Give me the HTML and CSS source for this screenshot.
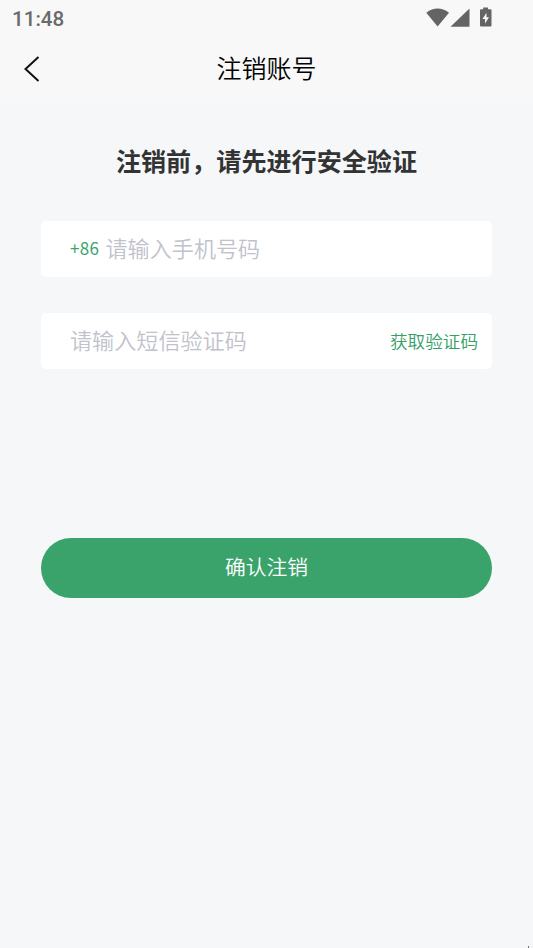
FILE: index.html
```html
<!DOCTYPE html>
<html lang="zh-CN">
<head>
<meta charset="utf-8">
<title>注销账号</title>
<link rel="stylesheet" href="styles.css">
</head>
<body>
<div class="status">
  <span class="time">11:48</span>
  <svg class="indicators" width="68" height="22" viewBox="0 0 68 22" fill="#646464">
    <path d="M0.300 5.700Q11.500-2.700 23 5.700L11.600 19.500Z"/>
    <path d="M43.500 1.500V19.800H24.500Z"/>
    <path fill-rule="evenodd" d="M57.200 0.500H62V2.300H64.500Q65.500 2.300 65.500 3.300V18.500Q65.500 19.500 64.500 19.500H55Q54 19.500 54 18.500V3.300Q54 2.300 55 2.300H57.200ZM60.500 5.800L56.500 12H59V16.500L63 10.300H60.500Z"/>
  </svg>
</div>
<header class="nav">
  <svg class="back" width="18" height="28" viewBox="0 0 18 28" fill="none" stroke="#111" stroke-width="2"><path d="M15.500 2L2.500 14L15.500 26"/></svg>
  <h1>注销账号</h1>
</header>
<main>
  <h2>注销前，请先进行安全验证</h2>
  <div class="field phone"><span class="code">+86</span><span class="hint">请输入手机号码</span></div>
  <div class="field sms"><span class="hint">请输入短信验证码</span><span class="send">获取验证码</span></div>
  <button class="confirm">确认注销</button>
</main>
<i class="corner"></i>
</body>
</html>
```

FILE: styles.css
```css
* { box-sizing: border-box; }
body { position: relative; margin: 0; height: 948px; overflow: hidden; background: #f5f7f9; font-family: "Noto Sans CJK SC", sans-serif; }
.status { height: 37px; padding: 7px 39px 0 12px; background: #f8f8f8; display: flex; justify-content: space-between; }
.time { font: 500 20.6px/24px Roboto, sans-serif; color: #6a6a6a; }
.nav { height: 66px; padding: 0 23px; background: #f8f8f8; display: grid; grid-template-columns: 18px 1fr 18px; }
.back { margin-top: 18px; }
h1 { margin: 12px 0 0; font-size: 25px; line-height: 36px; font-weight: 350; text-align: center; color: #000; }
main { padding: 39px 41px 0; }
h2 { margin: 0 0 41.500px; font-size: 25.1px; line-height: 37px; font-weight: 700; text-align: center; color: #333; white-space: nowrap; }
.field { height: 56.500px; margin-bottom: 35.500px; padding: 0 14px 0 29px; border-radius: 5px; background: #fff; display: flex; align-items: center; }
.code { width: 35.500px; margin-top: -3px; font: 400 17px "Noto Sans CJK SC", sans-serif; letter-spacing: .3px; color: #3aa36b; }
.hint { margin-top: -3px; font-size: 22.1px; font-weight: 350; color: #c0c2cc; }
.send { margin-left: auto; font-size: 17.6px; font-weight: 350; color: #34a068; }
.confirm { display: block; width: 100%; height: 59.500px; margin-top: 169px; padding: 0 0 4px; border: 0; border-radius: 30px; background: #3aa36b; color: #fff; font: 350 20.8px "Noto Sans CJK SC", sans-serif; }
.corner { position: absolute; right: 4px; bottom: 0; width: 1px; height: 2px; background: #777; }
```
